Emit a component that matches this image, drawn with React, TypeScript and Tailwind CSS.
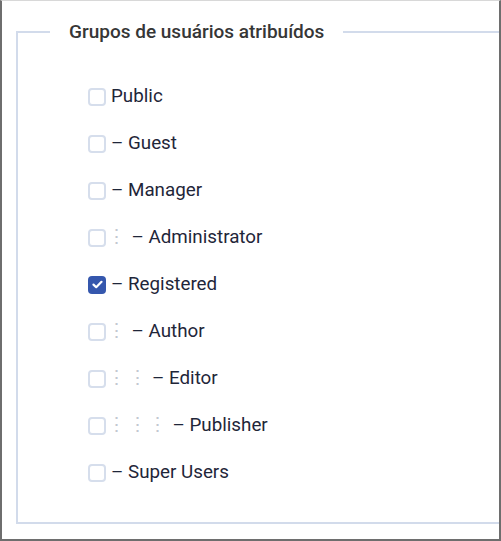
import React from "react";

type Item = { label: string; level: number; dash: boolean; checked?: boolean };

const items: Item[] = [
  { label: "Public", level: 0, dash: false },
  { label: "Guest", level: 0, dash: true },
  { label: "Manager", level: 0, dash: true },
  { label: "Administrator", level: 1, dash: true },
  { label: "Registered", level: 0, dash: true, checked: true },
  { label: "Author", level: 1, dash: true },
  { label: "Editor", level: 2, dash: true },
  { label: "Publisher", level: 3, dash: true },
  { label: "Super Users", level: 0, dash: true },
];

function Box({ checked }: { checked?: boolean }) {
  if (checked) {
    return (
      <span className="flex h-[18px] w-[18px] shrink-0 items-center justify-center rounded-[4px] bg-[#3557ad]">
        <svg width="11" height="9" viewBox="0 0 11 9" fill="none">
          <path d="M1.5 4.6 L4.2 7.2 L9.5 1.8" stroke="white" strokeWidth="2.2" strokeLinecap="round" strokeLinejoin="round" />
        </svg>
      </span>
    );
  }
  return <span className="block h-[18px] w-[18px] shrink-0 rounded-[4px] border-2 border-[#d6deec] bg-white" />;
}

export default function App() {
  return (
    <div
      className="box-border h-[541px] w-[501px] border-b-2 border-l-2 border-r-2 border-t border-b-[#6e6e6e] border-l-[#6e6e6e] border-r-[#6e6e6e] border-t-[#d8d8d8] bg-white"
      style={{ fontFamily: "Roboto, 'Liberation Sans', sans-serif" }}
    >
      <fieldset className="ml-[14px] mt-[19px] box-border h-[504px] w-[483px] border-2 border-r-0 border-[#d2dbeb] pl-[70px] pt-[29px]">
        <legend className="-ml-[38px] px-[19px] text-[19px] font-medium leading-[24px] text-[#363636]">
          Grupos de usuários atribuídos
        </legend>
        <div className="flex flex-col">
          {items.map((it) => (
            <div key={it.label} className="flex h-[47px] items-center">
              <Box checked={it.checked} />
              <span className="ml-[5px] flex items-center whitespace-pre text-[18.8px] text-[#1f2639]">
                {Array.from({ length: it.level }).map((_, i) => (
                  <span key={i} className="flex w-[20.5px] justify-start text-[#c3c8d1]">
                    <span className="-ml-[4px]">⋮</span>
                  </span>
                ))}
                {it.dash ? "– " : ""}
                {it.label}
              </span>
            </div>
          ))}
        </div>
      </fieldset>
    </div>
  );
}
